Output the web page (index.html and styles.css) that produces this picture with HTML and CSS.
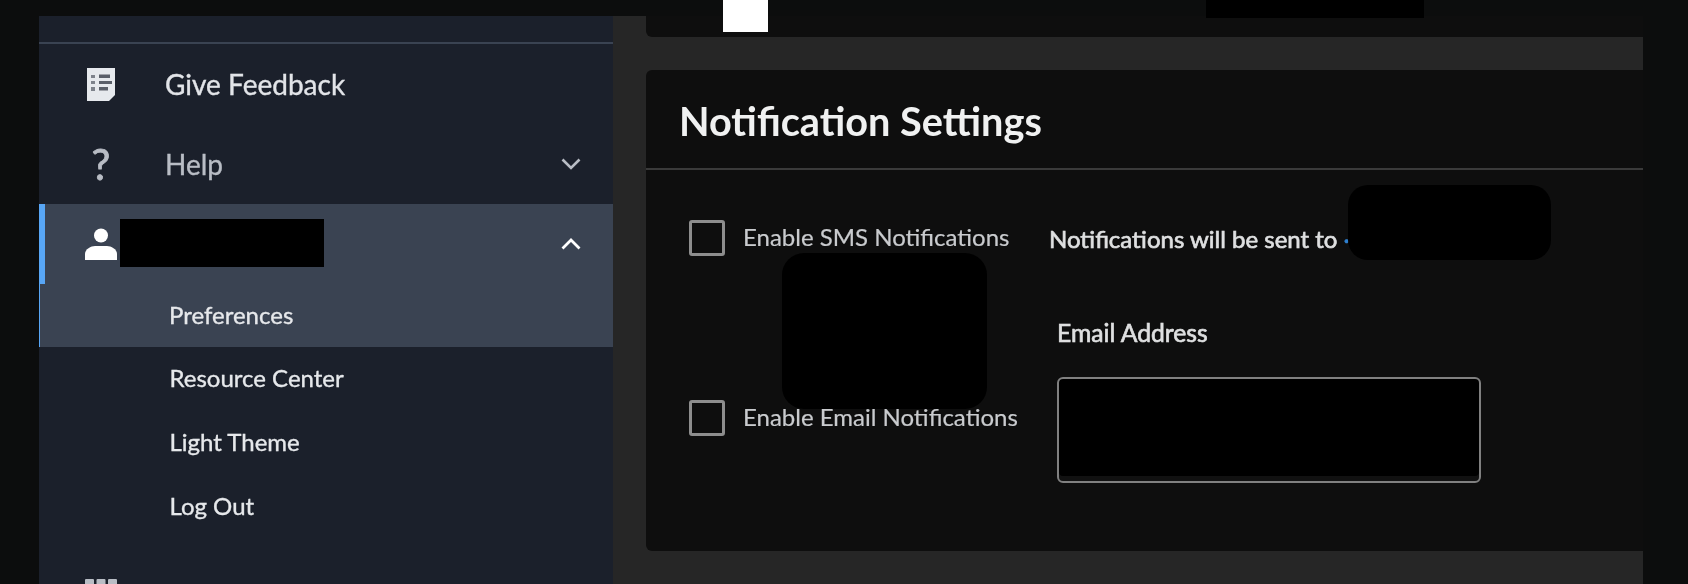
FILE: index.html
```html
<!DOCTYPE html>
<html lang="en">
<head>
<meta charset="utf-8">
<title>Notification Settings</title>
<link rel="stylesheet" href="styles.css">
</head>
<body>
<div class="frame">
  <nav class="sidebar">
    <div class="sidebar-top"></div>
    <a class="row">
      <span class="row-icon">
        <svg class="i-feedback" width="28" height="33" viewBox="0 0 28 33"><path fill="#e6e9ed" d="M0 0H28V27L22 33H0Z"/><g fill="#7d828b"><rect x="4" y="7" width="4" height="3"/><rect x="4" y="13" width="4" height="3"/><rect x="4" y="19" width="4" height="4"/></g><g fill="#5a5f69"><rect x="12" y="6.500" width="11" height="3.500"/><rect x="12" y="13" width="13" height="3"/><rect x="12" y="19" width="9" height="3.500"/></g></svg>
      </span>
      <span class="row-label">Give Feedback</span>
    </a>
    <a class="row row-dim">
      <span class="row-icon"><span class="i-help">?</span></span>
      <span class="row-label">Help</span>
      <svg class="chev" width="20" height="12" viewBox="0 0 20 12"><path d="M1.500 1.500 10 10 18.500 1.500" fill="none" stroke="#b9bdc5" stroke-width="2.600"/></svg>
    </a>
    <a class="row row-active">
      <span class="row-icon">
        <svg class="i-user" width="32" height="32" viewBox="0 0 32 32"><circle cx="16" cy="7.500" r="7" fill="#fff"/><path fill="#fff" d="M0 32V26C0 21 6 18 10 18H22C26 18 32 21 32 26V32Z"/></svg>
      </span>
      <svg class="chev" width="20" height="12" viewBox="0 0 20 12"><path d="M1.500 10.500 10 2 18.500 10.500" fill="none" stroke="#fff" stroke-width="2.800"/></svg>
    </a>
    <a class="sub sub-active">Preferences</a>
    <a class="sub">Resource Center</a>
    <a class="sub">Light Theme</a>
    <a class="sub">Log Out</a>
    <a class="row row-dim">
      <span class="row-icon">
        <svg class="i-grid" width="32" height="32" viewBox="0 0 32 32"><g fill="#b9bdc5"><rect width="9" height="9" rx="1"/><rect x="11.500" width="9" height="9" rx="1"/><rect x="23" width="9" height="9" rx="1"/></g></svg>
      </span>
    </a>
  </nav>
  <main class="main">
    <section class="card card-stub"></section>
    <section class="card">
      <h2 class="card-title">Notification Settings</h2>
      <div class="card-body">
        <label class="check"><span class="box"></span><span class="check-label">Enable SMS Notifications</span></label>
        <p class="sent">Notifications will be sent to <span class="sent-dot">·</span></p>
        <label class="check check-email"><span class="box"></span><span class="check-label">Enable Email Notifications</span></label>
        <div class="field">
          <div class="field-label">Email Address</div>
          <div class="field-input"></div>
        </div>
      </div>
    </section>
  </main>
</div>
<div class="mask mask-white"></div>
<div class="mask mask-top"></div>
<div class="mask mask-name"></div>
<div class="mask mask-phone"></div>
<div class="mask mask-blob"></div>
</body>
</html>
```

FILE: styles.css
```css
* { box-sizing: border-box; }
html, body { margin: 0; height: 584px; overflow: hidden; }
body {
  background: #0c0d0d;
  font-family: Lato, "Open Sans", sans-serif;
  padding: 16px 45px 0 39px;
  position: relative;
}
.frame {
  display: flex;
  height: 568px;
  filter: blur(0.6px);
}

/* Sidebar */
.sidebar {
  width: 574px;
  flex: none;
  background: #1b202b;
  overflow: hidden;
}
.sidebar-top { height: 28px; border-bottom: 2px solid #3a4352; }
.row {
  display: flex;
  align-items: center;
  height: 80px;
  padding-right: 32px;
  color: #e2e4e8;
  font-size: 28px;
  -webkit-text-stroke: 0.35px currentColor;
}
.row-dim { color: #b9bdc5; }
.row-icon {
  width: 126px;
  flex: none;
  padding-left: 46px;
  display: flex;
  align-items: center;
}
.i-feedback { margin-left: 2px; }
.i-help {
  width: 32px;
  text-align: center;
  font-size: 42px;
  line-height: 1;
  color: #b9bdc5;
  -webkit-text-stroke: 0.8px currentColor;
}
.chev { margin-left: auto; }
.row-active {
  background: #3a4352;
  border-left: 6px solid #58a6f5;
}
.row-active .row-icon { width: 120px; padding-left: 40px; }
.sub {
  display: block;
  height: 64px;
  padding-left: 130.500px;
  line-height: 62px;
  font-size: 24px;
  color: #e6e8eb;
  -webkit-text-stroke: 0.35px currentColor;
}
.sub-active {
  height: 63px;
  line-height: 61px;
  background: #3a4352;
  border-left: 1.500px solid #58a6f5;
  padding-left: 129px;
}
.sub + .row { align-items: flex-start; padding-top: 40px; }

/* Main */
.main {
  flex: 1;
  background: #262626;
  padding: 0 0 0 33px;
  display: flex;
  flex-direction: column;
  gap: 33px;
  overflow: hidden;
}
.card {
  background: #0e0e0e;
  border-radius: 6px 0 0 6px;
  height: 481px;
  flex: none;
}
.card-stub { height: 21px; border-radius: 0 0 0 6px; }
.card-title {
  margin: 0;
  height: 100px;
  padding-left: 33px;
  line-height: 102px;
  font-size: 39.700px;
  font-weight: 700;
  color: #f0f1f1;
  border-bottom: 2px solid #3a3a3a;
}
.card-body {
  display: grid;
  grid-template-columns: 360px 1fr;
  padding: 50px 0 0 43px;
}
.check {
  display: flex;
  align-items: center;
  gap: 18px;
  height: 36px;
  color: #c9cbce;
  font-size: 24px;
  -webkit-text-stroke: 0.2px currentColor;
}
.check-label { position: relative; top: -2px; }
.box {
  width: 36px;
  height: 36px;
  flex: none;
  border: 3px solid #8d8d8d;
  border-radius: 3px;
}
.sent {
  margin: 0;
  height: 36px;
  line-height: 38px;
  font-size: 24px;
  color: #dfe0e1;
  -webkit-text-stroke: 0.65px currentColor;
}
.sent-dot { color: #2f80d0; }
.check-email { margin-top: 144px; }
.field { padding: 64px 0 0 8px; }
.field-label {
  height: 57px;
  line-height: 26px;
  font-size: 24.700px;
  color: #dfe0e1;
  -webkit-text-stroke: 0.65px currentColor;
}
.field-input {
  width: 424px;
  height: 106px;
  background: #000;
  border: 2px solid #808080;
  border-radius: 6px;
  box-shadow: inset 0 -5px 0 #111;
}

/* Redactions */
.mask { position: absolute; background: #000; }
.mask-white { left: 723px; top: 0; width: 45px; height: 32px; background: #fff; }
.mask-top { left: 1206px; top: 0; width: 218px; height: 18px; }
.mask-name { left: 120px; top: 219px; width: 204px; height: 48px; }
.mask-phone { left: 1348px; top: 185px; width: 203px; height: 75px; border-radius: 20px; }
.mask-blob { left: 782px; top: 253px; width: 205px; height: 156px; border-radius: 22px; }
```
